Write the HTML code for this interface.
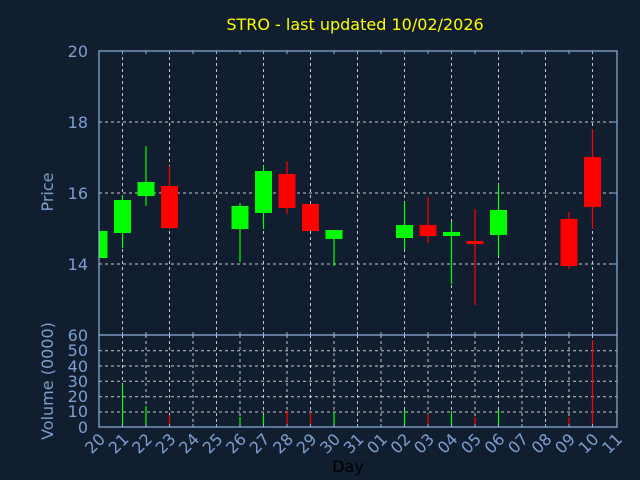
<!DOCTYPE html>
<html><head><meta charset="utf-8"><style>
html,body{margin:0;padding:0;background:#111e2f;}
svg{display:block}
text{font-family:"DejaVu Sans","Liberation Sans",sans-serif;}
</style></head><body>
<svg id="c" width="640" height="480" xmlns="http://www.w3.org/2000/svg">
<rect width="640" height="480" fill="#111e2f"/>
<text x="355" y="30" fill="#ffff00" font-size="16" text-anchor="middle">STRO - last updated 10/02/2026</text>
<g fill="#7f9fcf" font-size="16" text-anchor="end">
<text x="88" y="57">20</text><text x="88" y="128">18</text><text x="88" y="199">16</text><text x="88" y="270">14</text>
<text x="88" y="341">60</text><text x="88" y="356">50</text><text x="88" y="372">40</text><text x="88" y="387">30</text><text x="88" y="402">20</text><text x="88" y="417">10</text><text x="88" y="433">0</text>
</g>
<text transform="translate(53,192) rotate(-90)" fill="#7f9fcf" font-size="16" text-anchor="middle">Price</text>
<text transform="translate(53,381) rotate(-90)" fill="#7f9fcf" font-size="16" text-anchor="middle">Volume (0000)</text>
<text x="348" y="472" fill="#000" font-size="16" text-anchor="middle">Day</text>
<g id="g"></g>
</svg>
<script>
var g=document.getElementById('g'),s='';
var X=function(i){return 99+23.5*i;};
var ax='#8fb0dc',gr='#c8c8c8';
// price grid
[122,193,264].forEach(function(y){s+='<line x1="99" x2="617" y1="'+y+'" y2="'+y+'" stroke="'+gr+'" stroke-dasharray="3,3"/>';});
for(var i=1;i<22;i+=2){var x=X(i);s+='<line x1="'+x+'" x2="'+x+'" y1="51" y2="335" stroke="'+gr+'" stroke-dasharray="3,3"/>';}
// volume grid
[350.7,366,381.3,396.7,412].forEach(function(y){s+='<line x1="99" x2="617" y1="'+y+'" y2="'+y+'" stroke="'+gr+'" stroke-dasharray="3,3"/>';});
for(var i=1;i<22;i++){var x=X(i);s+='<line x1="'+x+'" x2="'+x+'" y1="335" y2="427" stroke="'+gr+'" stroke-dasharray="3,3"/>';}
// candles [i,color,bt,bb,wt,wb]
var C=[[0,'g',231,258,231,258],[1,'g',200,233,195,248],[2,'g',182,196,146,206],[3,'r',186,228,166,229],
[6,'g',206,229,203,262],[7,'g',171,213,166,229],[8,'r',174,208,161,214],[9,'r',204,231,204,231],[10,'g',230,239,230,266],
[13,'g',225,238,202,249],[14,'r',225,236,197,243],[15,'g',232,236,222,284],[16,'r',241,244,209,305],[17,'g',210,235,185,256],
[20,'r',219,266,212,269],[21,'r',157,207,129,229]];
C.forEach(function(c){var x=X(c[0]),col=c[1]=='g'?'#00ff00':'#ff0000';
s+='<line x1="'+x+'" x2="'+x+'" y1="'+c[4]+'" y2="'+c[5]+'" stroke="'+col+'" stroke-width="1.2"/>';
var l=Math.max(99,x-8.5);s+='<rect x="'+l+'" y="'+c[2]+'" width="'+(x+8.5-l)+'" height="'+(c[3]-c[2])+'" fill="'+col+'"/>';});
// volume
var V=[[1,'g',42],[2,'g',21],[3,'r',12],[6,'g',10],[7,'g',12],[8,'r',16],[9,'r',14],[10,'g',15],[13,'g',17],[14,'r',13],[15,'g',16],[16,'r',10],[17,'g',17],[20,'r',10],[21,'r',87]];
V.forEach(function(v){var x=X(v[0]),col=v[1]=='g'?'#00ff00':'#ff0000';s+='<line x1="'+x+'" x2="'+x+'" y1="'+(427-v[2])+'" y2="427" stroke="'+col+'" stroke-width="1.2"/>';});
// axes
s+='<rect x="99" y="51" width="518" height="376" fill="none" stroke="'+ax+'" stroke-width="1.2"/>';
s+='<line x1="99" x2="617" y1="335" y2="335" stroke="'+ax+'" stroke-width="1.2"/>';
for(var i=1;i<22;i++){var x=X(i);var h=(i%2)?3:3;s+='<line x1="'+x+'" x2="'+x+'" y1="51" y2="'+(51+h)+'" stroke="'+ax+'"/>';s+='<line x1="'+x+'" x2="'+x+'" y1="335" y2="332" stroke="'+ax+'"/>';s+='<line x1="'+x+'" x2="'+x+'" y1="427" y2="424" stroke="'+ax+'"/>';}
[122,193,264].forEach(function(y){s+='<line x1="612" x2="617" y1="'+y+'" y2="'+y+'" stroke="'+ax+'"/>';});
var D=['20','21','22','23','24','25','26','27','28','29','30','31','01','02','03','04','05','06','07','08','09','10','11'];
D.forEach(function(d,i){var x=X(i)+4,y=437;s+='<text transform="translate('+x+','+y+') rotate(-45)" fill="#7f9fcf" font-size="16" text-anchor="end" dominant-baseline="middle">'+d+'</text>';});
g.innerHTML=s;
</script>
</body></html>
